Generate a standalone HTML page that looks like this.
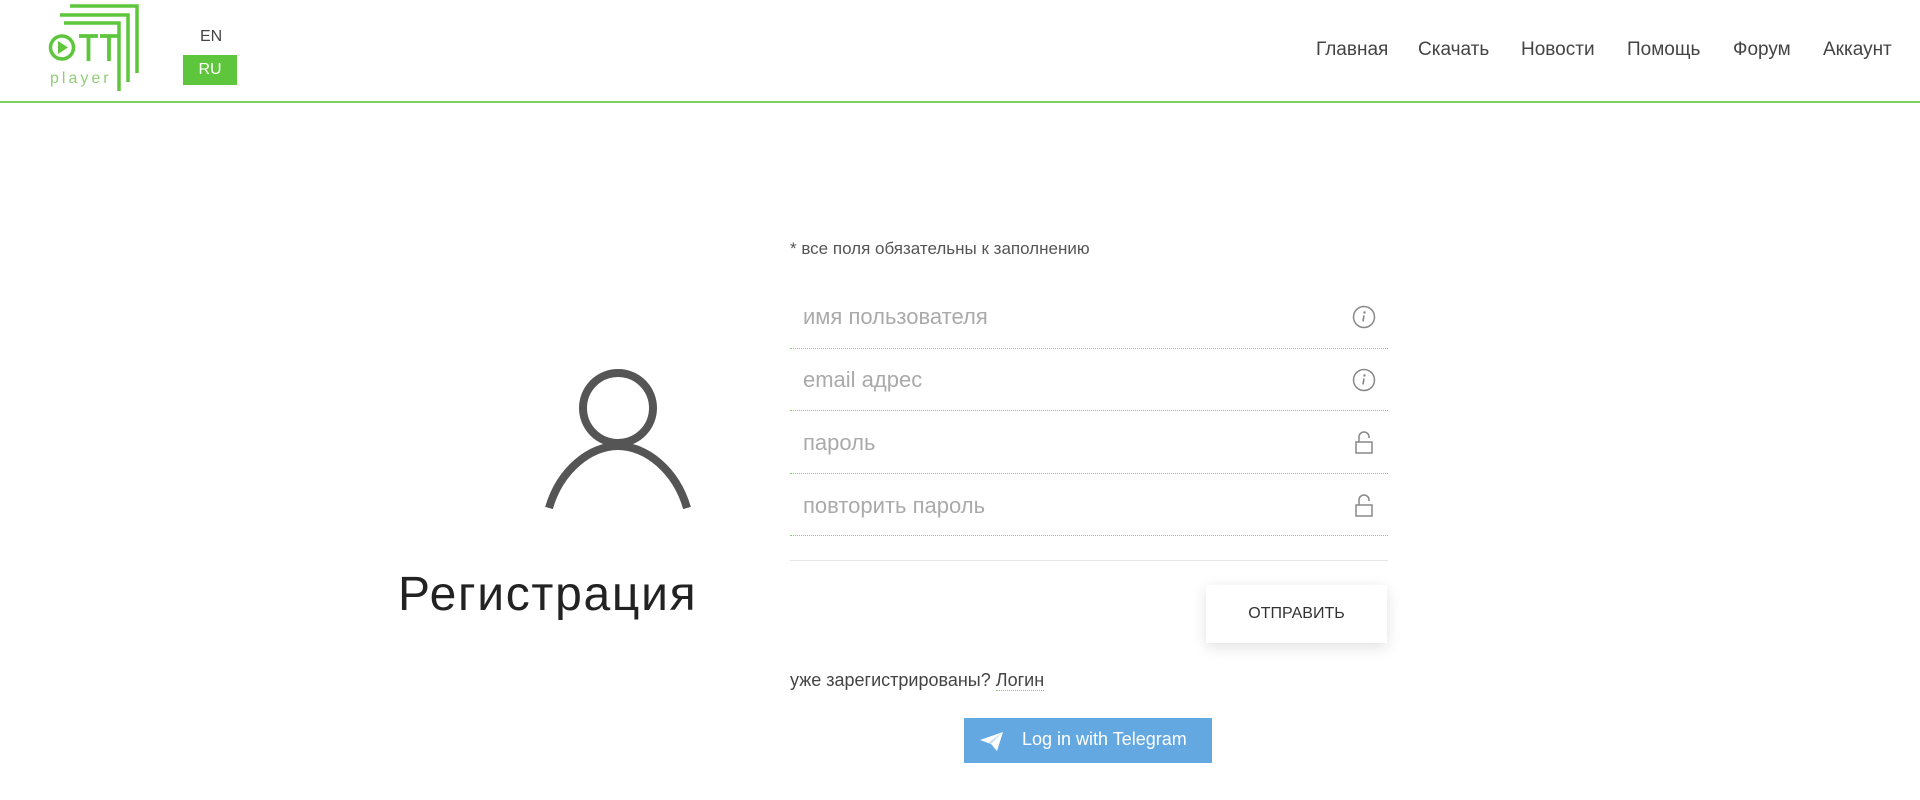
<!DOCTYPE html>
<html><head><meta charset="utf-8"><style>
*{margin:0;padding:0;box-sizing:border-box}
body{width:1920px;height:800px;background:#fff;font-family:"Liberation Sans","DejaVu Sans",sans-serif;position:relative;overflow:hidden;color:#444}
.a{position:absolute;white-space:nowrap}
.nav{top:39px;font-size:19px;color:#444}
.hl{position:absolute;left:0;top:101px;width:1920px;height:2px;background:#7dcf5e}
.ph{left:803px;font-size:22px;color:#aaa;font-weight:300}
.ul{position:absolute;left:790px;width:598px;height:0;border-top:1px dotted #86cf6a}
</style></head><body>
<svg class="a" style="left:0;top:0" width="150" height="100" viewBox="0 0 150 100">
<g fill="none" stroke="#5ec63c" stroke-width="3.5">
<path d="M70 6H137V73"/><path d="M60 15H128V82"/><path d="M64 23H119V91"/>
<circle cx="62" cy="47.5" r="11.5"/>
<path d="M79 36H98M88.5 36V61M100 36H118M109 36V61" stroke-width="3.8"/>
</g>
<path d="M58 41V54L68 47.5Z" fill="#5ec63c"/>
<text x="50" y="83" font-family="Liberation Sans,sans-serif" font-size="16" letter-spacing="3" fill="#8fce78">player</text>
</svg>
<div class="a" style="left:200px;top:28px;font-size:16px;color:#444">EN</div>
<div class="a" style="left:183px;top:55px;width:54px;height:30px;background:#5ec63c;color:#fff;font-size:16px;text-align:center;line-height:30px">RU</div>
<div class="a nav" style="left:1316px">Главная</div>
<div class="a nav" style="left:1418px">Скачать</div>
<div class="a nav" style="left:1521px">Новости</div>
<div class="a nav" style="left:1627px">Помощь</div>
<div class="a nav" style="left:1733px">Форум</div>
<div class="a nav" style="left:1823px">Аккаунт</div>
<div class="hl"></div>

<svg class="a" style="left:540px;top:360px" width="160" height="160" viewBox="540 360 160 160">
<g fill="none" stroke="#555" stroke-width="8">
<circle cx="618" cy="408" r="35"/>
<path d="M549 508C560 470 590 446 618 446C646 446 676 470 687 508"/>
</g></svg>
<div class="a" style="left:398px;top:567px;font-size:48px;color:#222;letter-spacing:1.7px">Регистрация</div>

<div class="a" style="left:790px;top:239px;font-size:17px;color:#555">* все поля обязательны к заполнению</div>
<div class="a ph" style="top:304px">имя пользователя</div>
<div class="a ph" style="top:367px">email адрес</div>
<div class="a ph" style="top:430px">пароль</div>
<div class="a ph" style="top:493px">повторить пароль</div>
<div class="ul" style="top:348px"></div>
<div class="ul" style="top:410px"></div>
<div class="ul" style="top:473px"></div>
<div class="ul" style="top:535px"></div>
<div class="a" style="left:790px;top:560px;width:598px;height:1px;background:#e6e6e6"></div>
<svg class="a" style="left:1352px;top:305px" width="24" height="24"><circle cx="12" cy="12" r="10.5" fill="none" stroke="#888" stroke-width="1.5"/><circle cx="12.5" cy="7.5" r="1.2" fill="#888"/><path d="M12 10.5L11 16.5" stroke="#888" stroke-width="1.6"/></svg>
<svg class="a" style="left:1352px;top:368px" width="24" height="24"><circle cx="12" cy="12" r="10.5" fill="none" stroke="#888" stroke-width="1.5"/><circle cx="12.5" cy="7.5" r="1.2" fill="#888"/><path d="M12 10.5L11 16.5" stroke="#888" stroke-width="1.6"/></svg>
<svg class="a" style="left:1353px;top:431px" width="22" height="24"><g fill="none" stroke="#888" stroke-width="1.5"><rect x="3" y="11" width="16" height="11"/><path d="M6 11V6a5 5 0 0 1 10 0v1"/></g></svg>
<svg class="a" style="left:1353px;top:494px" width="22" height="24"><g fill="none" stroke="#888" stroke-width="1.5"><rect x="3" y="11" width="16" height="11"/><path d="M6 11V6a5 5 0 0 1 10 0v1"/></g></svg>

<div class="a" style="left:1206px;top:585px;width:181px;height:58px;background:#fff;box-shadow:0 4px 14px rgba(0,0,0,0.12);text-align:center;line-height:58px;font-size:16px;color:#333">ОТПРАВИТЬ</div>
<div class="a" style="left:790px;top:670px;font-size:18px;color:#444">уже зарегистрированы? <span style="border-bottom:1px dotted #7dcf5e">Логин</span></div>
<div class="a" style="left:964px;top:718px;width:248px;height:45px;background:#64a8e2;color:#fff;font-size:18px;line-height:43px">
<svg style="position:absolute;left:14px;top:11px" width="28" height="24" viewBox="0 0 28 24"><path d="M2 11L25 3L19 22L13 15Z" fill="#fff"/><path d="M13 15L25 3L11 13Z" fill="#c8def2"/></svg>
<span style="position:absolute;left:58px">Log in with Telegram</span></div>
</body></html>
